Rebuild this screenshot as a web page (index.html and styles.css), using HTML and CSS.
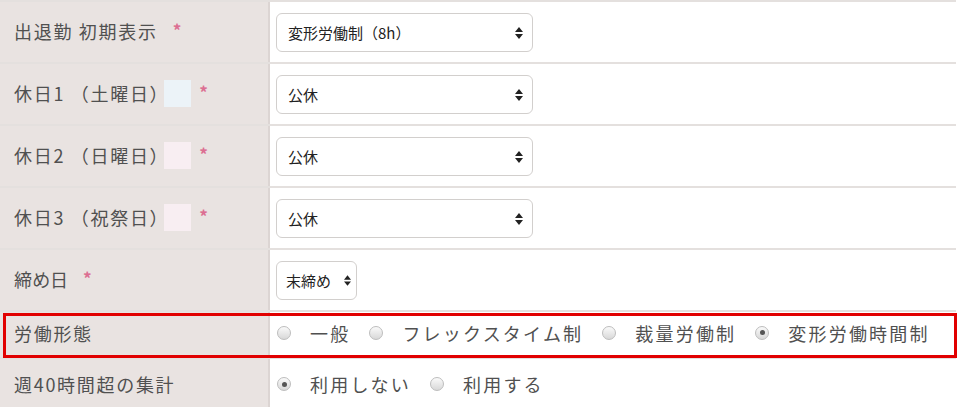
FILE: index.html
```html
<!DOCTYPE html>
<html lang="ja">
<head>
  <meta charset="UTF-8" />
  <meta name="viewport" content="width=device-width, initial-scale=1.0" />
  <title>勤務設定</title>
  <link rel="stylesheet" href="styles.css">
</head>
<body>
  <div class="form">

    <!-- 出退勤 -->
    <div class="row">
      <div class="label">出退勤 初期表示<span class="req">*</span></div>
      <div class="field">
        <span class="select wide">
          <select><option>変形労働制（8h）</option></select>
          <svg class="arrows" viewBox="0 0 8 12" width="8" height="12"><path d="M4 0 L8 5 L0 5 Z M4 12 L8 7 L0 7 Z"/></svg>
        </span>
      </div>
    </div>

    <!-- 休日 -->
    <div class="row">
      <div class="label">休日1 （土曜日）<span class="swatch sat"></span><span class="req">*</span></div>
      <div class="field">
        <span class="select wide">
          <select><option>公休</option></select>
          <svg class="arrows" viewBox="0 0 8 12" width="8" height="12"><path d="M4 0 L8 5 L0 5 Z M4 12 L8 7 L0 7 Z"/></svg>
        </span>
      </div>
    </div>

    <div class="row">
      <div class="label">休日2 （日曜日）<span class="swatch sun"></span><span class="req">*</span></div>
      <div class="field">
        <span class="select wide">
          <select><option>公休</option></select>
          <svg class="arrows" viewBox="0 0 8 12" width="8" height="12"><path d="M4 0 L8 5 L0 5 Z M4 12 L8 7 L0 7 Z"/></svg>
        </span>
      </div>
    </div>

    <div class="row">
      <div class="label">休日3 （祝祭日）<span class="swatch sun"></span><span class="req">*</span></div>
      <div class="field">
        <span class="select wide">
          <select><option>公休</option></select>
          <svg class="arrows" viewBox="0 0 8 12" width="8" height="12"><path d="M4 0 L8 5 L0 5 Z M4 12 L8 7 L0 7 Z"/></svg>
        </span>
      </div>
    </div>

    <!-- 締め日 -->
    <div class="row">
      <div class="label"><span class="tight">締め日</span><span class="req">*</span></div>
      <div class="field">
        <span class="select narrow">
          <select><option>末締め</option></select>
          <svg class="arrows" viewBox="0 0 8 12" width="8" height="12"><path d="M4 0 L8 5 L0 5 Z M4 12 L8 7 L0 7 Z"/></svg>
        </span>
      </div>
    </div>

    <!-- 労働形態（強調） -->
    <div class="row short marked">
      <div class="label">労働形態</div>
      <div class="field radios">
        <label><input type="radio" name="kind"> 一般</label>
        <label><input type="radio" name="kind"> フレックスタイム制</label>
        <label><input type="radio" name="kind"> 裁量労働制</label>
        <label><input type="radio" name="kind" checked> 変形労働時間制</label>
      </div>
    </div>

    <div class="row last">
      <div class="label">週40時間超の集計</div>
      <div class="field radios">
        <label><input type="radio" name="over" checked> 利用しない</label>
        <label><input type="radio" name="over"> 利用する</label>
      </div>
    </div>

  </div>
</body>
</html>
```

FILE: styles.css
```css
/* ===== テーマ ===== */
:root {
  --label-bg: #e9e3e1;
  --line:     #e4e0de;
  --text:     #505050;
  --req:      #dc6f92;
  --mark:     #e10000;
}

* { box-sizing: border-box; }
body {
  margin: 0;
  background: #fff;
  color: var(--text);
  font-family: "Noto Sans CJK JP", "Noto Sans", sans-serif;
}

/* ===== フォーム表 ===== */
.form {
  width: 956px;
  border-top: 2px solid var(--line);
}
.row {
  display: grid;
  grid-template-columns: 270px 1fr;
  height: 62px;
  border-bottom: 2px solid var(--line);
}
.row.short { height: 47px; }
.row.last  { height: 52px; border-bottom: none; }

.label {
  display: flex;
  align-items: center;
  padding-left: 14px;
  padding-bottom: 2px;
  background: var(--label-bg);
  border-right: 2px solid #dcd5d3;
  font-size: 18px;
  letter-spacing: 1.7px;
}
.short .label, .short .field { padding-bottom: 4px; }
.tight { letter-spacing: 0; font-feature-settings: "palt"; }
.req {
  color: var(--req);
  font-size: 17px;
  font-weight: bold;
  margin-left: 15px;
  position: relative;
  top: -2px;
}
.swatch {
  width: 27px;
  height: 27px;
  margin-left: -5px;
}
.swatch + .req { margin-left: 8px; }
.sat { background: #ecf3f8; }
.sun { background: #f8eef2; }

.field {
  display: flex;
  align-items: center;
  padding-left: 6px;
}

/* ===== セレクト ===== */
.select {
  position: relative;
  display: inline-block;
  height: 39px;
}
.select.wide   { width: 257px; }
.select.narrow { width: 81px; }
.select select {
  appearance: none;
  -webkit-appearance: none;
  width: 100%;
  height: 100%;
  padding: 0 24px 0 11px;
  border: 1px solid #d2cfcd;
  border-radius: 6px;
  background: #fff;
  color: #222;
  font-family: inherit;
  font-size: 15px;
}
.select.narrow select { padding: 0 10px 0 9px; }
.arrows {
  position: absolute;
  right: 10px;
  top: 14px;
  fill: #222;
  pointer-events: none;
}
.select.narrow .arrows { right: 6px; top: 14px; width: 7px; height: 11px; }

/* ===== ラジオ ===== */
.radios { padding-left: 7px; padding-bottom: 2px; gap: 19px; }
.radios label {
  display: flex;
  align-items: center;
  gap: 10px;
  font-size: 18px;
  letter-spacing: 2.2px;
  color: var(--text);
}
.radios input {
  appearance: none;
  -webkit-appearance: none;
  width: 14px;
  height: 14px;
  margin: 0 9px 0 0;
  border: 1px solid #bdbdbd;
  border-radius: 50%;
  background: linear-gradient(#fafafa, #d8d8d8);
  position: relative;
}
.radios input:checked::after {
  content: "";
  position: absolute;
  left: 3.5px;
  top: 3.5px;
  width: 5px;
  height: 5px;
  border-radius: 50%;
  background: #555;
}

/* ===== 強調枠 ===== */
.marked { position: relative; }
.marked::after {
  content: "";
  position: absolute;
  left: 3px;
  right: -1px;
  top: 1px;
  bottom: -1px;
  border: 3px solid var(--mark);
  pointer-events: none;
}
```
